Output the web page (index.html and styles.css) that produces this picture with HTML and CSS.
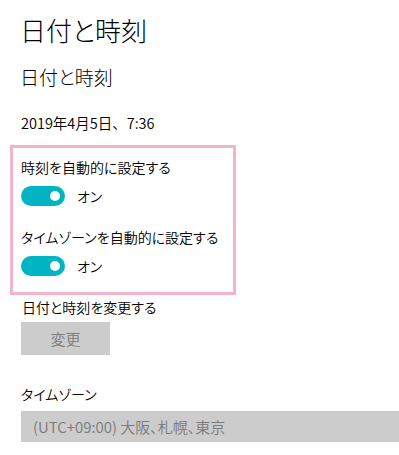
FILE: index.html
```html
<!DOCTYPE html>
<html lang="ja">
<head>
<meta charset="utf-8">
<link rel="stylesheet" href="styles.css">
</head>
<body>
<div class="page">
  <h1 class="title">日付と時刻</h1>
  <h2 class="subtitle">日付と時刻</h2>
  <div class="now">2019年4月5日、7:36</div>

  <div class="highlight">
    <div class="label">時刻を自動的に設定する</div>
    <div class="toggle-row">
      <span class="toggle"><span class="knob"></span></span>
      <span class="state">オン</span>
    </div>
    <div class="label label-second">タイムゾーンを自動的に設定する</div>
    <div class="toggle-row">
      <span class="toggle"><span class="knob"></span></span>
      <span class="state">オン</span>
    </div>
  </div>

  <div class="label label-change">日付と時刻を変更する</div>
  <div class="button">変更</div>

  <div class="label label-tz">タイムゾーン</div>
  <div class="select">(UTC+09:00) 大阪、札幌、東京</div>
</div>
</body>
</html>
```
FILE: styles.css
```css
html, body {
  margin: 0;
  padding: 0;
  background: #ffffff;
  overflow: hidden;
}

body {
  font-family: "Noto Sans CJK JP", "Noto Sans", sans-serif;
  color: #000000;
  font-feature-settings: "palt";
  font-weight: 350;
}

.page {
  padding: 12px 0 0 21px;
  display: flex;
  flex-direction: column;
  align-items: flex-start;
}

.title {
  margin: 0;
  font-size: 26px;
  line-height: 36px;
  font-weight: 300;
  margin-left: -1px;
}

.subtitle {
  margin: 15px 0 0 -1px;
  font-size: 19px;
  line-height: 28px;
  font-weight: 300;
}

.now {
  margin-top: 21px;
  font-size: 14.5px;
  line-height: 22px;
  font-feature-settings: normal;
}

.highlight {
  margin: 11px 0 0 -11px;
  width: 212px;
  border: 3px solid #f3b3ca;
  padding: 8px 0 16px 8px;
}

.label {
  font-size: 14px;
  line-height: 22px;
}

.label-second {
  margin-top: 20px;
}

.toggle-row {
  margin-top: 8px;
  display: flex;
  align-items: center;
  height: 20px;
}

.toggle {
  width: 44px;
  height: 20px;
  border-radius: 10px;
  background: #00b4c3;
  display: flex;
  align-items: center;
  justify-content: flex-end;
  padding-right: 5px;
  box-sizing: border-box;
}

.knob {
  width: 10px;
  height: 10px;
  border-radius: 50%;
  background: #ffffff;
}

.state {
  margin-left: 12px;
  font-size: 14px;
  line-height: 20px;
}

.label-change {
  margin-top: 1px;
  margin-left: 1px;
}

.button {
  margin-top: 4px;
  width: 89px;
  height: 33px;
  background: #cccccc;
  color: #7a7a7a;
  font-size: 15px;
  display: flex;
  align-items: center;
  justify-content: center;
}

.label-tz {
  margin-top: 28px;
}

.select {
  align-self: stretch;
  margin-top: 6px;
  height: 31px;
  background: #cccccc;
  color: #7a7a7a;
  font-size: 15px;
  line-height: 31px;
  padding-left: 12px;
}
```
